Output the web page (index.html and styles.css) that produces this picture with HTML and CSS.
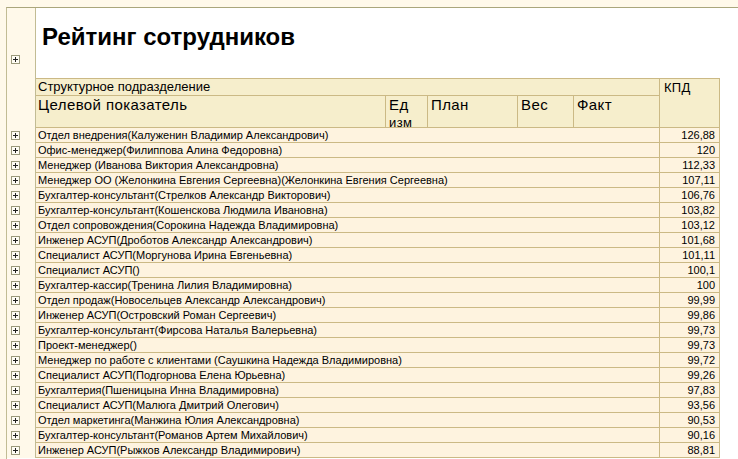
FILE: index.html
```html
<!DOCTYPE html>
<html lang="ru">
<head>
<meta charset="utf-8">
<title>Рейтинг сотрудников</title>
<link rel="stylesheet" href="styles.css">
</head>
<body>
<div class="sheet">
  <div class="row title-row">
    <div class="gutter gutter-title"><span class="plus"><svg width="9" height="9" viewBox="0 0 9 9"><rect x="0.5" y="0.5" width="8" height="8" fill="#fffdf4" stroke="#9c9a7c"/><path d="M2 4.5H7M4.5 2V7" stroke="#222" stroke-width="1"/></svg></span></div>
    <div class="title-cell"><h1 class="title">Рейтинг сотрудников</h1></div>
  </div>
  <div class="row head-row">
    <div class="gutter"></div>
    <div class="head-main">
      <div class="head-top">Структурное подразделение</div>
      <div class="head-sub">
        <div class="hs hs-target">Целевой показатель</div>
        <div class="hs hs-unit">Ед<br><span class="small">изм</span></div>
        <div class="hs hs-plan">План</div>
        <div class="hs hs-weight">Вес</div>
        <div class="hs hs-fact">Факт</div>
      </div>
    </div>
    <div class="head-kpd">КПД</div>
  </div>
  <div id="rows"></div>
</div>
<script src="app.js"></script>
</body>
</html>
```
FILE: app.js
```js
var data = [
  ["Отдел внедрения(Калуженин Владимир Александрович)", "126,88"],
  ["Офис-менеджер(Филиппова Алина Федоровна)", "120"],
  ["Менеджер (Иванова Виктория Александровна)", "112,33"],
  ["Менеджер ОО (Желонкина Евгения Сергеевна)(Желонкина Евгения Сергеевна)", "107,11"],
  ["Бухгалтер-консультант(Стрелков Александр Викторович)", "106,76"],
  ["Бухгалтер-консультант(Кошенскова Людмила Ивановна)", "103,82"],
  ["Отдел сопровождения(Сорокина Надежда Владимировна)", "103,12"],
  ["Инженер АСУП(Дроботов Александр Александрович)", "101,68"],
  ["Специалист АСУП(Моргунова Ирина Евгеньевна)", "101,11"],
  ["Специалист АСУП()", "100,1"],
  ["Бухгалтер-кассир(Тренина Лилия Владимировна)", "100"],
  ["Отдел продаж(Новосельцев Александр Александрович)", "99,99"],
  ["Инженер АСУП(Островский Роман Сергеевич)", "99,86"],
  ["Бухгалтер-консультант(Фирсова Наталья Валерьевна)", "99,73"],
  ["Проект-менеджер()", "99,73"],
  ["Менеджер по работе с клиентами (Саушкина Надежда Владимировна)", "99,72"],
  ["Специалист АСУП(Подгорнова Елена Юрьевна)", "99,26"],
  ["Бухгалтерия(Пшеницына Инна Владимировна)", "97,83"],
  ["Специалист АСУП(Малюга Дмитрий Олегович)", "93,56"],
  ["Отдел маркетинга(Манжина Юлия Александровна)", "90,53"],
  ["Бухгалтер-консультант(Романов Артем Михайлович)", "90,16"],
  ["Инженер АСУП(Рыжков Александр Владимирович)", "88,81"]
];
var plus = '<span class="plus"><svg width="9" height="9" viewBox="0 0 9 9"><rect x="0.5" y="0.5" width="8" height="8" fill="#fffdf4" stroke="#9c9a7c"/><path d="M2 4.5H7M4.5 2V7" stroke="#222" stroke-width="1"/></svg></span>';
var html = '';
data.forEach(function (d) {
  html += '<div class="row data-row"><div class="gutter">' + plus + '</div>' +
    '<div class="cell-name">' + d[0] + '</div>' +
    '<div class="cell-kpd">' + d[1] + '</div></div>';
});
document.getElementById('rows').innerHTML = html;
```
FILE: styles.css
```css
html, body {
  margin: 0;
  padding: 0;
}
body {
  background: #fff9ea;
  font-family: "Liberation Sans", Arial, sans-serif;
  color: #000;
  height: 459px;
  overflow: hidden;
}
.sheet {
  margin: 7px 0 0 6px;
  border-top: 1px solid #aaa67c;
  border-left: 1px solid #c2bc94;
  background: #fff;
  min-height: 460px;
}
.row {
  display: flex;
}
.gutter {
  flex: none;
  width: 29px;
  background: #fff9ea;
  border-right: 1px solid #c2bc94;
  display: flex;
  align-items: center;
  padding-left: 4px;
  box-sizing: border-box;
}
.plus {
  display: block;
  width: 9px;
  height: 9px;
}
.plus svg {
  display: block;
}
.title-row {
  height: 70px;
}
.gutter-title {
  align-items: flex-start;
  padding-top: 47px;
}
.title-cell {
  flex: 1;
  padding: 15px 0 0 6px;
}
.title {
  margin: 0;
  font-size: 24px;
  line-height: 28px;
  font-weight: bold;
}
.head-row {
  height: 50px;
}
.head-main {
  width: 624px;
  box-sizing: border-box;
  border-top: 1px solid #cbb985;
  border-bottom: 1px solid #cbb985;
  border-right: 1px solid #cbb985;
  background: #f6eecc;
  display: flex;
  flex-direction: column;
}
.head-top {
  height: 17px;
  border-bottom: 1px solid #cbb985;
  font-size: 13px;
  line-height: 16px;
  padding-left: 2px;
}
.head-sub {
  flex: 1;
  display: flex;
}
.hs {
  font-size: 15px;
  letter-spacing: 0.4px;
  line-height: 17px;
  padding: 0 0 0 3px;
  border-right: 1px solid #cbb985;
  box-sizing: border-box;
}
.hs-target { width: 350px; padding-left: 2px; }
.hs-unit { width: 42px; }
.hs-unit .small { font-size: 13px; }
.hs-plan { width: 90px; }
.hs-weight { width: 56px; }
.hs-fact { flex: 1; border-right: none; }
.head-kpd {
  width: 60px;
  box-sizing: border-box;
  border-top: 1px solid #cbb985;
  border-bottom: 1px solid #cbb985;
  border-right: 1px solid #cbb985;
  background: #f6eecc;
  font-size: 13px;
  letter-spacing: 0.3px;
  line-height: 16px;
  padding: 1px 0 0 4px;
}
.data-row {
  height: 15px;
}
.cell-name {
  width: 624px;
  box-sizing: border-box;
  background: #fef3df;
  border-right: 1px solid #cbb985;
  border-bottom: 1px solid #cbb985;
  font-size: 11px;
  line-height: 14px;
  padding-left: 2px;
  white-space: nowrap;
  overflow: hidden;
}
.cell-kpd {
  width: 60px;
  box-sizing: border-box;
  background: #fef3df;
  border-right: 1px solid #cbb985;
  border-bottom: 1px solid #cbb985;
  font-size: 11px;
  line-height: 14px;
  text-align: right;
  padding-right: 4px;
}
```
